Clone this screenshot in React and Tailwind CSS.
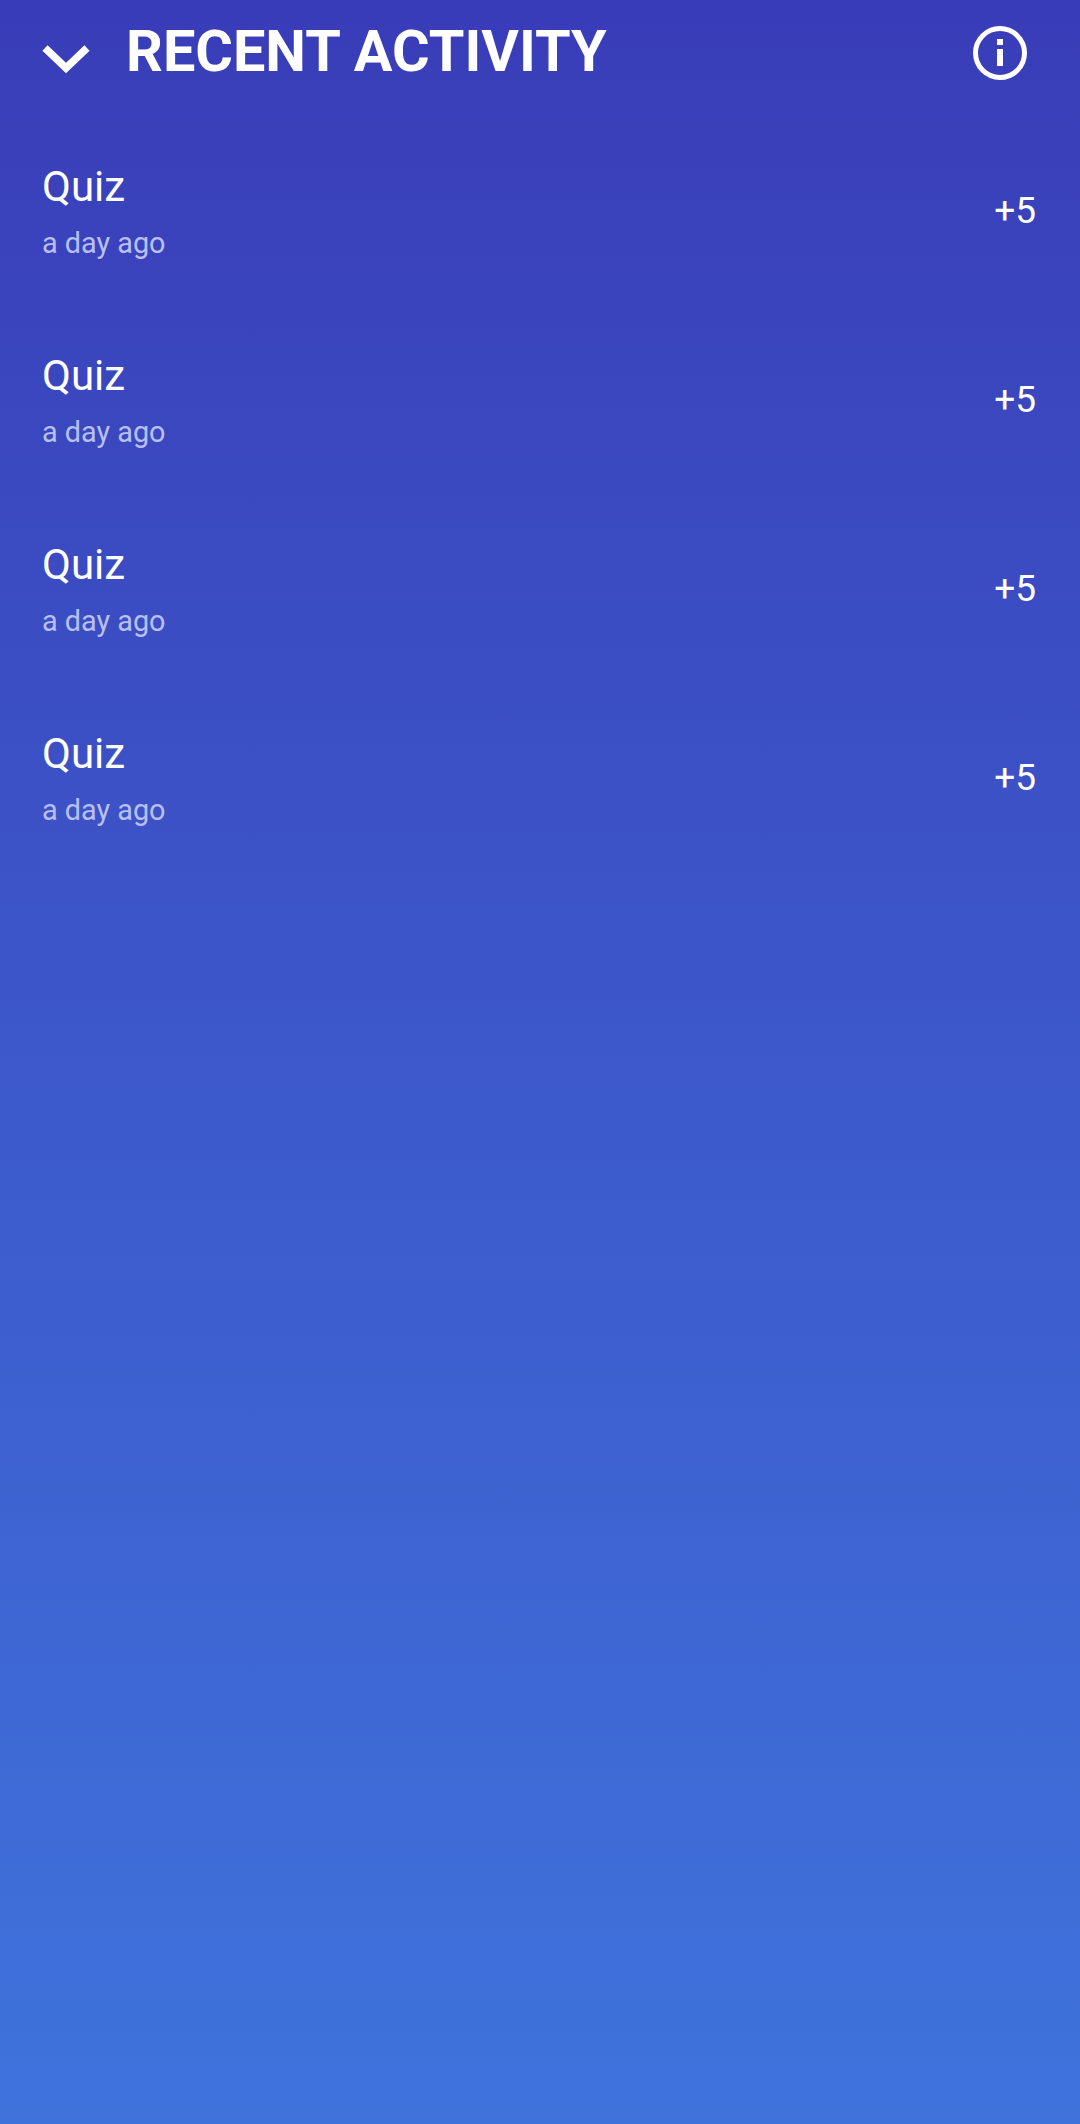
const rows = [1, 2, 3, 4];

function ActivityRow() {
  return (
    <div className="flex h-[189px] items-center justify-between pl-[42px] pr-[44px]">
      <div className="flex flex-col">
        <div className="text-[42px] leading-[56px] text-white">Quiz</div>
        <div className="mt-[8px] text-[28.8px] leading-[40px] text-[#b9c0f0]">a day ago</div>
      </div>
      <div className="mt-[1px] text-[37px] leading-[48px] text-white">+5</div>
    </div>
  );
}

export default function App() {
  return (
    <div className="h-[2124px] w-[1080px] overflow-hidden bg-gradient-to-b from-[#393cb8] to-[#3f73dc] font-['Roboto',sans-serif]">
      <header className="flex h-[104px] items-center pl-[42px] pr-[53px]">
        <svg width="48" height="32" viewBox="0 0 48 32" fill="none" className="mt-[11px] shrink-0">
          <path d="M3 6 L24 26 L45 6" stroke="white" strokeWidth="7.5" />
        </svg>
        <h1 className="ml-[36px] flex-1 text-[57.6px] font-bold leading-[104px] text-white">RECENT ACTIVITY</h1>
        <svg width="54" height="54" viewBox="0 0 54 54" fill="none" className="mt-[2px] shrink-0">
          <circle cx="27" cy="27" r="24.5" stroke="white" strokeWidth="5" />
          <rect x="24" y="23" width="6" height="17" fill="white" />
          <rect x="24" y="13" width="6" height="6" fill="white" />
        </svg>
      </header>
      <main className="pt-[12px]">
        {rows.map((r) => (
          <ActivityRow key={r} />
        ))}
      </main>
    </div>
  );
}
